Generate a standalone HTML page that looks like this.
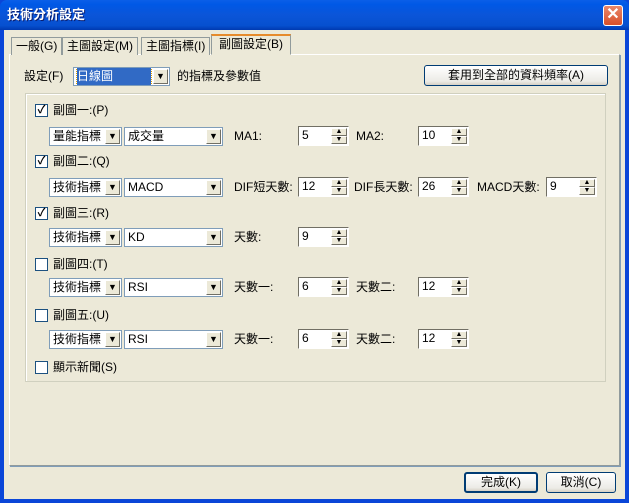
<!DOCTYPE html>
<html><head><meta charset="utf-8"><style>
*{box-sizing:border-box;margin:0;padding:0}
body{width:629px;height:503px;overflow:hidden;background:#0a46d8;font-family:"Liberation Sans","Noto Sans CJK TC",sans-serif;font-size:12px;line-height:13px;color:#000;position:relative}
.a{position:absolute}
#title{left:0;top:0;width:629px;height:30px;background:linear-gradient(#0a5fe8,#0058e6 15%,#0b55d8 50%,#0650d0 85%,#003ab0);border-radius:7px 7px 0 0;color:#fff;font-weight:bold;font-size:13px;line-height:30px;padding-left:7px;text-shadow:1px 1px #0a1e70}
#close{left:603px;top:5px;width:20px;height:21px;background:linear-gradient(#e9876a,#d9502a);border:1px solid #fff;border-radius:3px;color:#fff;text-align:center;line-height:18px;font-size:16px;font-weight:bold}
#body{left:4px;top:30px;width:621px;height:469px;background:#ece9d8}
.panel{left:9px;top:54px;width:611px;height:412px;border:1px solid #919b9c;border-top-color:#fff;border-left-color:#fff;box-shadow:1px 1px 0 #7f9db9}
.tab{top:37px;height:18px;border:1px solid #919b9c;border-bottom:none;background:#ece9d8;line-height:16px;padding:0 4px;white-space:nowrap}
.btn{height:21px;border:1px solid #003c74;border-radius:3px;background:linear-gradient(#fff,#ecebe6 80%,#d6d0c5);text-align:center;line-height:19px}
.grp{left:25px;top:93px;width:581px;height:289px;border:1px solid #d0d0bf;box-shadow:inset 1px 1px 0 #fff}
.cb{width:13px;height:13px;border:1px solid #1c5180;background:#fff;font-size:11px;line-height:11px;text-align:center;font-weight:bold;color:#000}
.combo{height:19px;border:1px solid #7f9db9;background:#fff;line-height:17px;padding-left:3px;overflow:hidden;white-space:nowrap}
.combo i{position:absolute;right:1px;top:1px;width:15px;height:15px;background:#ece9d8;border:1px solid;border-color:#fff #716f64 #716f64 #fff;font-style:normal;font-size:9px;line-height:13px;text-align:center}
.spin{height:20px;width:51px;border:1px solid;border-color:#716f64 #fff #fff #716f64;background:#fff;padding-left:3px;line-height:17px}
.spin b,.spin u{position:absolute;right:1px;width:16px;height:8px;background:#ece9d8;border:1px solid;border-color:#fff #716f64 #716f64 #fff;font-size:7px;line-height:6px;text-align:center;font-weight:normal;text-decoration:none}
.spin b{top:1px}.spin u{top:9px}
</style></head><body>
<div class="a" id="title">技術分析設定</div>
<div class="a" id="close">✕</div>
<div class="a" id="body"></div>
<div class="a panel"></div>
<div class="a tab" style="left:11px">一般(G)</div>
<div class="a tab" style="left:62px">主圖設定(M)</div>
<div class="a tab" style="left:141px">主圖指標(I)</div>
<div class="a tab" style="left:211px;top:34px;height:21px;border-top:2px solid #e68b2c;border-bottom:1px solid #ece9d8;padding:0 7px;line-height:17px">副圖設定(B)</div>
<div class="a" style="left:24px;top:70px">設定(F)</div>
<div class="a combo" style="left:73px;top:67px;width:97px;background:#fff"><span style="background:#316ac5;color:#fff;display:inline-block;width:74px;outline:1px dotted #e0a000">日線圖</span><i>▼</i></div>
<div class="a" style="left:177px;top:70px">的指標及參數值</div>
<div class="a btn" style="left:424px;top:65px;width:184px">套用到全部的資料頻率(A)</div>
<div class="a grp"></div>

<div class="a cb" style="left:35px;top:104px">✓</div><div class="a" style="left:53px;top:104px">副圖一:(P)</div>
<div class="a combo" style="left:49px;top:127px;width:73px">量能指標<i>▼</i></div>
<div class="a combo" style="left:124px;top:127px;width:99px">成交量<i>▼</i></div>
<div class="a" style="left:234px;top:130px">MA1:</div><div class="a spin" style="left:298px;top:126px">5<b>▲</b><u>▼</u></div>
<div class="a" style="left:356px;top:130px">MA2:</div><div class="a spin" style="left:418px;top:126px">10<b>▲</b><u>▼</u></div>

<div class="a cb" style="left:35px;top:155px">✓</div><div class="a" style="left:53px;top:155px">副圖二:(Q)</div>
<div class="a combo" style="left:49px;top:178px;width:73px">技術指標<i>▼</i></div>
<div class="a combo" style="left:124px;top:178px;width:99px">MACD<i>▼</i></div>
<div class="a" style="left:234px;top:181px">DIF短天數:</div><div class="a spin" style="left:298px;top:177px">12<b>▲</b><u>▼</u></div>
<div class="a" style="left:354px;top:181px">DIF長天數:</div><div class="a spin" style="left:418px;top:177px">26<b>▲</b><u>▼</u></div>
<div class="a" style="left:477px;top:181px">MACD天數:</div><div class="a spin" style="left:546px;top:177px">9<b>▲</b><u>▼</u></div>

<div class="a cb" style="left:35px;top:207px">✓</div><div class="a" style="left:53px;top:207px">副圖三:(R)</div>
<div class="a combo" style="left:49px;top:228px;width:73px">技術指標<i>▼</i></div>
<div class="a combo" style="left:124px;top:228px;width:99px">KD<i>▼</i></div>
<div class="a" style="left:234px;top:231px">天數:</div><div class="a spin" style="left:298px;top:227px">9<b>▲</b><u>▼</u></div>

<div class="a cb" style="left:35px;top:258px"></div><div class="a" style="left:53px;top:258px">副圖四:(T)</div>
<div class="a combo" style="left:49px;top:278px;width:73px">技術指標<i>▼</i></div>
<div class="a combo" style="left:124px;top:278px;width:99px">RSI<i>▼</i></div>
<div class="a" style="left:234px;top:281px">天數一:</div><div class="a spin" style="left:298px;top:277px">6<b>▲</b><u>▼</u></div>
<div class="a" style="left:356px;top:281px">天數二:</div><div class="a spin" style="left:418px;top:277px">12<b>▲</b><u>▼</u></div>

<div class="a cb" style="left:35px;top:309px"></div><div class="a" style="left:53px;top:309px">副圖五:(U)</div>
<div class="a combo" style="left:49px;top:330px;width:73px">技術指標<i>▼</i></div>
<div class="a combo" style="left:124px;top:330px;width:99px">RSI<i>▼</i></div>
<div class="a" style="left:234px;top:333px">天數一:</div><div class="a spin" style="left:298px;top:329px">6<b>▲</b><u>▼</u></div>
<div class="a" style="left:356px;top:333px">天數二:</div><div class="a spin" style="left:418px;top:329px">12<b>▲</b><u>▼</u></div>

<div class="a cb" style="left:35px;top:361px"></div><div class="a" style="left:53px;top:361px">顯示新聞(S)</div>

<div class="a btn" style="left:464px;top:472px;width:74px;border-width:2px;line-height:17px">完成(K)</div>
<div class="a btn" style="left:546px;top:472px;width:70px">取消(C)</div>
</body></html>
